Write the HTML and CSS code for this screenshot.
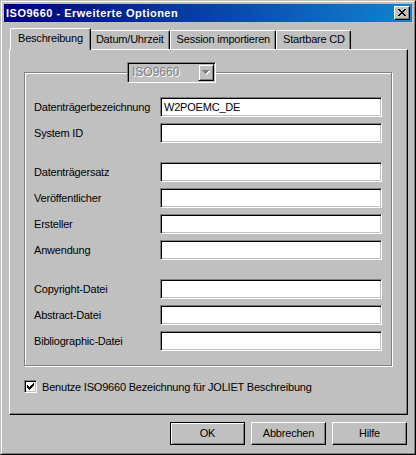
FILE: index.html
```html
<!DOCTYPE html>
<html lang="de">
<head>
<meta charset="utf-8">
<title>ISO9660 - Erweiterte Optionen</title>
<link rel="stylesheet" href="styles.css">
</head>
<body>
<div class="window">
  <div class="frame">
    <div class="titlebar">
      <span class="title">ISO9660 - Erweiterte Optionen</span>
      <span class="close">
        <svg width="8" height="7" viewBox="0 0 8 7" shape-rendering="crispEdges"><path fill="#000" d="M0 0h2v1H0zM6 0h2v1H6zM1 1h2v1H1zM5 1h2v1H5zM2 2h4v1H2zM3 3h2v1H3zM2 4h4v1H2zM1 5h2v1H1zM5 5h2v1H5zM0 6h2v1H0zM6 6h2v1H6z"/></svg>
      </span>
    </div>
    <div class="client">
      <div class="tabs">
        <div class="tab active">Beschreibung</div>
        <div class="tab">Datum/Uhrzeit</div>
        <div class="tab">Session importieren</div>
        <div class="tab">Startbare CD</div>
      </div>
      <div class="panel">
        <fieldset class="group">
          <legend class="combo">
            <span class="combo-text">ISO9660</span>
            <span class="combo-btn">
              <svg width="8" height="5" viewBox="0 0 8 5" shape-rendering="crispEdges"><path fill="#fff" d="M1 1h7v1H1zM2 2h5v1H2zM3 3h3v1H3zM4 4h1v1H4z"/><path fill="#808080" d="M0 0h7v1H0zM1 1h5v1H1zM2 2h3v1H2zM3 3h1v1H3z"/></svg>
            </span>
          </legend>
          <div class="fields">
            <div class="section">
              <div class="row"><label>Datenträgerbezeichnung</label><input class="edit" type="text" value="W2POEMC_DE"></div>
              <div class="row"><label>System ID</label><input class="edit" type="text"></div>
            </div>
            <div class="section">
              <div class="row"><label>Datenträgersatz</label><input class="edit" type="text"></div>
              <div class="row"><label>Veröffentlicher</label><input class="edit" type="text"></div>
              <div class="row"><label>Ersteller</label><input class="edit" type="text"></div>
              <div class="row"><label>Anwendung</label><input class="edit" type="text"></div>
            </div>
            <div class="section">
              <div class="row"><label>Copyright-Datei</label><input class="edit" type="text"></div>
              <div class="row"><label>Abstract-Datei</label><input class="edit" type="text"></div>
              <div class="row"><label>Bibliographic-Datei</label><input class="edit" type="text"></div>
            </div>
          </div>
        </fieldset>
        <div class="check-row">
          <span class="checkbox">
            <svg width="7" height="7" viewBox="0 0 7 7" shape-rendering="crispEdges"><path fill="#000" d="M6 0h1v1H6zM5 1h2v1H5zM0 2h1v1H0zM4 2h3v1H4zM0 3h2v1H0zM3 3h3v1H3zM0 4h5v1H0zM1 5h3v1H1zM2 6h1v1H2z"/></svg>
          </span>
          <span class="check-label">Benutze ISO9660 Bezeichnung für JOLIET Beschreibung</span>
        </div>
      </div>
      <div class="buttons">
        <div class="btn default">OK</div>
        <div class="btn">Abbrechen</div>
        <div class="btn">Hilfe</div>
      </div>
    </div>
  </div>
</div>
</body>
</html>
```

FILE: styles.css
```css
* { box-sizing: border-box; }
html, body { margin: 0; padding: 0; }
body {
  font-family: "Liberation Sans", Arial, sans-serif;
  font-size: 11px;
  letter-spacing: -0.2px;
  color: #000;
  background: #c0c0c0;
}
.window {
  width: 416px;
  height: 455px;
  border: 1px solid;
  border-color: #c0c0c0 #000 #000 #c0c0c0;
  background: #c0c0c0;
}
.frame {
  height: 100%;
  border: 1px solid;
  border-color: #fff #808080 #808080 #fff;
  padding: 2px;
  display: flex;
  flex-direction: column;
}
.titlebar {
  height: 18px;
  flex: none;
  background: linear-gradient(to right, #000080, #1084d0);
  display: flex;
  align-items: center;
  justify-content: space-between;
  padding: 0 2px 0 2px;
}
.title {
  color: #fff;
  font-weight: bold;
  font-size: 11px;
  letter-spacing: 0.5px;
  line-height: 18px;
}
.close {
  width: 16px;
  height: 14px;
  background: #c0c0c0;
  border: 1px solid;
  border-color: #fff #000 #000 #fff;
  box-shadow: inset -1px -1px #808080;
  display: flex;
  align-items: center;
  justify-content: center;
  padding: 0 1px 1px 0;
}
.close svg { display: block; }
.client {
  flex: 1;
  display: flex;
  flex-direction: column;
  padding: 6px 4px 0 5px;
}
.tabs {
  display: flex;
  align-items: flex-end;
  height: 21px;
  padding-left: 3px;
  position: relative;
  z-index: 1;
}
.tab {
  height: 19px;
  padding: 0 5px 0 6px;
  line-height: 17px;
  border: 1px solid;
  border-bottom: none;
  border-color: #fff #000 #000 #fff;
  border-radius: 2px 2px 0 0;
  box-shadow: inset -1px 0 #808080;
  background: #c0c0c0;
  white-space: nowrap;
}
.tab.active {
  height: 22px;
  margin: 0 -2px 0 -2px;
  padding: 0 7px;
  line-height: 18px;
  position: relative;
  z-index: 2;
  align-self: flex-start;
  margin-bottom: -1px;
}
.panel {
  height: 366px;
  flex: none;
  border: 1px solid;
  border-color: #fff #000 #000 #fff;
  box-shadow: inset -1px -1px #808080;
  padding: 12px 0 0 14px;
}
.group {
  width: 368px;
  margin: 0;
  padding: 0 0 14px 9px;
  border: 1px solid #808080;
  box-shadow: inset 1px 1px #fff, 1px 1px #fff;
  min-width: 0;
}
.combo {
  margin-left: 93px;
  width: 89px;
  height: 21px;
  display: flex;
  border: 1px solid;
  border-color: #808080 #fff #fff #808080;
  box-shadow: inset 1px 1px #000, inset -1px -1px #c0c0c0;
  background: #c0c0c0;
  padding: 1px;
}
.combo-text {
  flex: 1;
  color: #808080;
  text-shadow: 1px 1px #fff;
  line-height: 17px;
  padding-left: 3px;
  font-size: 12px;
  letter-spacing: 0;
}
.combo-btn {
  width: 16px;
  height: 17px;
  border: 1px solid;
  border-color: #c0c0c0 #000 #000 #c0c0c0;
  box-shadow: inset 1px 1px #fff, inset -1px -1px #808080;
  display: flex;
  align-items: center;
  justify-content: center;
}
.combo-btn svg { display: block; }
.fields {
  display: flex;
  flex-direction: column;
  gap: 19px;
  padding-top: 14px;
}
.section {
  display: flex;
  flex-direction: column;
  gap: 6px;
}
.row {
  display: grid;
  grid-template-columns: 126px 222px;
  align-items: center;
}
.row label { white-space: nowrap; }
.edit {
  height: 20px;
  width: 222px;
  margin: 0;
  border: 1px solid;
  border-color: #808080 #fff #fff #808080;
  box-shadow: inset 1px 1px #000, inset -1px -1px #c0c0c0;
  background: #fff;
  padding: 0 3px;
  font: inherit;
  letter-spacing: inherit;
  color: #000;
  outline: none;
}
.check-row {
  display: flex;
  align-items: center;
  gap: 5px;
  margin-top: 14px;
}
.checkbox {
  width: 13px;
  height: 13px;
  background: #fff;
  border: 1px solid;
  border-color: #808080 #fff #fff #808080;
  box-shadow: inset 1px 1px #000, inset -1px -1px #c0c0c0;
  display: flex;
  align-items: center;
  justify-content: center;
}
.checkbox svg { display: block; }
.buttons {
  display: flex;
  justify-content: flex-end;
  gap: 6px;
  margin-top: 7px;
  padding-right: 1px;
}
.btn {
  width: 75px;
  height: 23px;
  line-height: 21px;
  text-align: center;
  border: 1px solid;
  border-color: #fff #000 #000 #fff;
  box-shadow: inset -1px -1px #808080;
}
.btn.default {
  border-color: #000;
  box-shadow: inset 1px 1px #fff, inset -1px -1px #808080;
}
```
